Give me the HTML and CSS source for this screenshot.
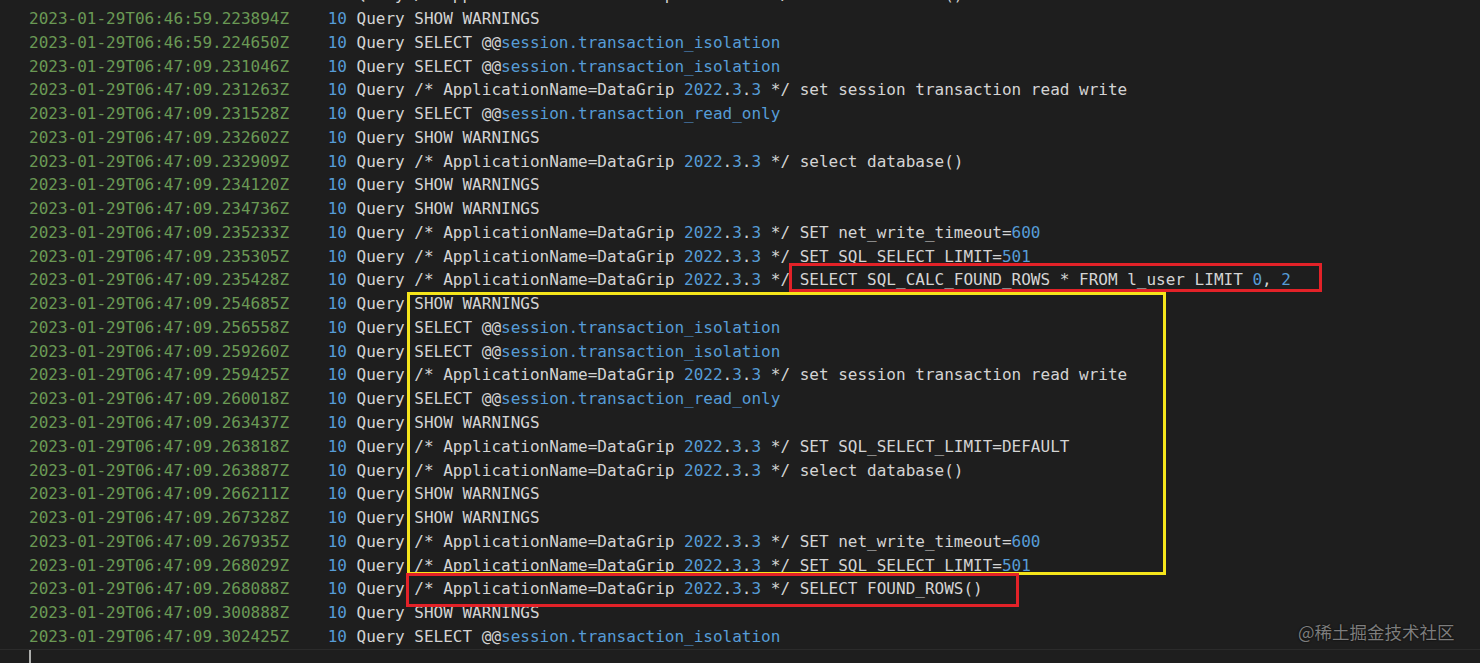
FILE: index.html
```html
<!DOCTYPE html>
<html>
<head>
<meta charset="utf-8">
<link rel="stylesheet" href="styles.css">
</head>
<body>
<div class="screen">
  <div class="log">
    <div class="row"><span class="ts">2023-01-29T06:46:59.223120Z</span>    <span class="n">10</span> Query /* ApplicationName=DataGrip <span class="n">2022</span>.<span class="n">3</span>.<span class="n">3</span> */ select database()</div>
    <div class="row"><span class="ts">2023-01-29T06:46:59.223894Z</span>    <span class="n">10</span> Query SHOW WARNINGS</div>
    <div class="row"><span class="ts">2023-01-29T06:46:59.224650Z</span>    <span class="n">10</span> Query SELECT @@<span class="n">session.transaction_isolation</span></div>
    <div class="row"><span class="ts">2023-01-29T06:47:09.231046Z</span>    <span class="n">10</span> Query SELECT @@<span class="n">session.transaction_isolation</span></div>
    <div class="row"><span class="ts">2023-01-29T06:47:09.231263Z</span>    <span class="n">10</span> Query /* ApplicationName=DataGrip <span class="n">2022</span>.<span class="n">3</span>.<span class="n">3</span> */ set session transaction read write</div>
    <div class="row"><span class="ts">2023-01-29T06:47:09.231528Z</span>    <span class="n">10</span> Query SELECT @@<span class="n">session.transaction_read_only</span></div>
    <div class="row"><span class="ts">2023-01-29T06:47:09.232602Z</span>    <span class="n">10</span> Query SHOW WARNINGS</div>
    <div class="row"><span class="ts">2023-01-29T06:47:09.232909Z</span>    <span class="n">10</span> Query /* ApplicationName=DataGrip <span class="n">2022</span>.<span class="n">3</span>.<span class="n">3</span> */ select database()</div>
    <div class="row"><span class="ts">2023-01-29T06:47:09.234120Z</span>    <span class="n">10</span> Query SHOW WARNINGS</div>
    <div class="row"><span class="ts">2023-01-29T06:47:09.234736Z</span>    <span class="n">10</span> Query SHOW WARNINGS</div>
    <div class="row"><span class="ts">2023-01-29T06:47:09.235233Z</span>    <span class="n">10</span> Query /* ApplicationName=DataGrip <span class="n">2022</span>.<span class="n">3</span>.<span class="n">3</span> */ SET net_write_timeout=<span class="n">600</span></div>
    <div class="row"><span class="ts">2023-01-29T06:47:09.235305Z</span>    <span class="n">10</span> Query /* ApplicationName=DataGrip <span class="n">2022</span>.<span class="n">3</span>.<span class="n">3</span> */ SET SQL_SELECT_LIMIT=<span class="n">501</span></div>
    <div class="row"><span class="ts">2023-01-29T06:47:09.235428Z</span>    <span class="n">10</span> Query /* ApplicationName=DataGrip <span class="n">2022</span>.<span class="n">3</span>.<span class="n">3</span> */ SELECT SQL_CALC_FOUND_ROWS * FROM l_user LIMIT <span class="n">0</span>, <span class="n">2</span></div>
    <div class="row"><span class="ts">2023-01-29T06:47:09.254685Z</span>    <span class="n">10</span> Query SHOW WARNINGS</div>
    <div class="row"><span class="ts">2023-01-29T06:47:09.256558Z</span>    <span class="n">10</span> Query SELECT @@<span class="n">session.transaction_isolation</span></div>
    <div class="row"><span class="ts">2023-01-29T06:47:09.259260Z</span>    <span class="n">10</span> Query SELECT @@<span class="n">session.transaction_isolation</span></div>
    <div class="row"><span class="ts">2023-01-29T06:47:09.259425Z</span>    <span class="n">10</span> Query /* ApplicationName=DataGrip <span class="n">2022</span>.<span class="n">3</span>.<span class="n">3</span> */ set session transaction read write</div>
    <div class="row"><span class="ts">2023-01-29T06:47:09.260018Z</span>    <span class="n">10</span> Query SELECT @@<span class="n">session.transaction_read_only</span></div>
    <div class="row"><span class="ts">2023-01-29T06:47:09.263437Z</span>    <span class="n">10</span> Query SHOW WARNINGS</div>
    <div class="row"><span class="ts">2023-01-29T06:47:09.263818Z</span>    <span class="n">10</span> Query /* ApplicationName=DataGrip <span class="n">2022</span>.<span class="n">3</span>.<span class="n">3</span> */ SET SQL_SELECT_LIMIT=DEFAULT</div>
    <div class="row"><span class="ts">2023-01-29T06:47:09.263887Z</span>    <span class="n">10</span> Query /* ApplicationName=DataGrip <span class="n">2022</span>.<span class="n">3</span>.<span class="n">3</span> */ select database()</div>
    <div class="row"><span class="ts">2023-01-29T06:47:09.266211Z</span>    <span class="n">10</span> Query SHOW WARNINGS</div>
    <div class="row"><span class="ts">2023-01-29T06:47:09.267328Z</span>    <span class="n">10</span> Query SHOW WARNINGS</div>
    <div class="row"><span class="ts">2023-01-29T06:47:09.267935Z</span>    <span class="n">10</span> Query /* ApplicationName=DataGrip <span class="n">2022</span>.<span class="n">3</span>.<span class="n">3</span> */ SET net_write_timeout=<span class="n">600</span></div>
    <div class="row"><span class="ts">2023-01-29T06:47:09.268029Z</span>    <span class="n">10</span> Query /* ApplicationName=DataGrip <span class="n">2022</span>.<span class="n">3</span>.<span class="n">3</span> */ SET SQL_SELECT_LIMIT=<span class="n">501</span></div>
    <div class="row"><span class="ts">2023-01-29T06:47:09.268088Z</span>    <span class="n">10</span> Query /* ApplicationName=DataGrip <span class="n">2022</span>.<span class="n">3</span>.<span class="n">3</span> */ SELECT FOUND_ROWS()</div>
    <div class="row"><span class="ts">2023-01-29T06:47:09.300888Z</span>    <span class="n">10</span> Query SHOW WARNINGS</div>
    <div class="row"><span class="ts">2023-01-29T06:47:09.302425Z</span>    <span class="n">10</span> Query SELECT @@<span class="n">session.transaction_isolation</span></div>
    <div class="current"><span class="caret"></span></div>
  </div>
  <div class="mark red-a"></div>
  <div class="mark yellow"></div>
  <div class="mark red-b"></div>
  <div class="watermark">@稀土掘金技术社区</div>
</div>
</body>
</html>
```

FILE: styles.css
```css
html, body {
  margin: 0;
  padding: 0;
  background: #1e1e1e;
}
.screen {
  position: relative;
  width: 1480px;
  height: 663px;
  overflow: hidden;
  background: #1e1e1e;
}
.log {
  margin-top: -16.8px;
  font-family: "DejaVu Sans Mono", "Liberation Mono", monospace;
  font-size: 16px;
  color: #d4d4d4;
}
.row {
  height: 23.77px;
  line-height: 23.77px;
  padding-left: 29px;
  white-space: pre;
}
.ts { color: #6a9955; }
.n { color: #569cd6; }
.current {
  height: 30px;
  border-top: 1px solid #2b2b2b;
  padding-left: 29px;
}
.caret {
  display: block;
  width: 2px;
  height: 22px;
  background: #aeafad;
}
.mark {
  position: absolute;
  box-sizing: border-box;
}
.red-a {
  left: 789px;
  top: 263px;
  width: 533px;
  height: 29px;
  border: 3px solid #e32228;
}
.yellow {
  left: 407px;
  top: 292px;
  width: 759px;
  height: 283px;
  border: 3px solid #f5e51b;
}
.red-b {
  left: 406px;
  top: 573px;
  width: 613px;
  height: 34px;
  border: 3px solid #e32228;
}
.watermark {
  position: absolute;
  left: 1298px;
  top: 620px;
  font-family: "Noto Sans CJK SC", "Noto Sans", sans-serif;
  font-size: 17.5px;
  line-height: 24px;
  color: #7d7d7d;
  text-shadow: 0 0 2px #000;
}
```
